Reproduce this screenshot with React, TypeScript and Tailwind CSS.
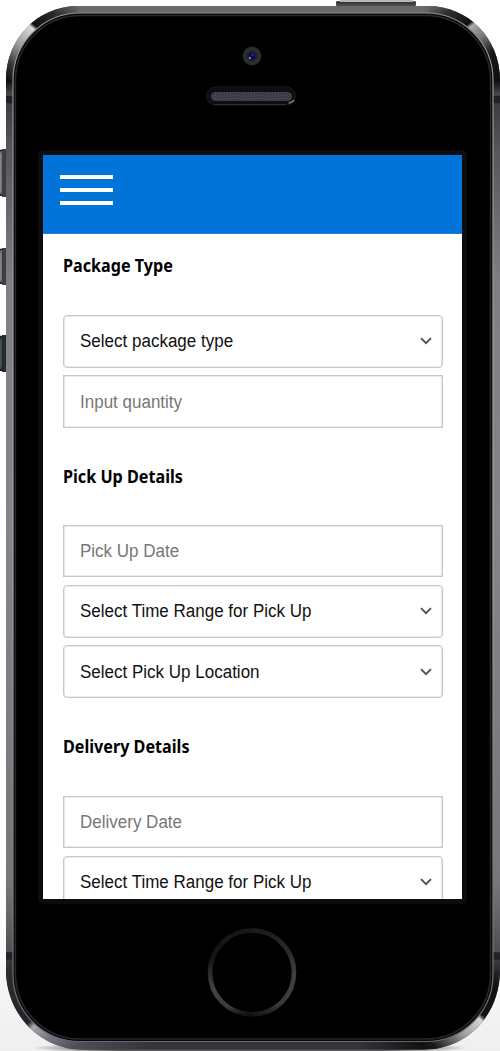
import React from "react";

const RIM =
  "M78 6 H428 C468 6 500 38 500 80 V970 C500 1014 468 1049.5 424 1049.5 H82 C40 1049.5 6 1014 6 970 V80 C6 38 38 6 78 6 Z";

function SideButton({ y, h, dark }: { y: number; h: number; dark?: boolean }) {
  return (
    <g>
      <rect x="-4" y={y + 1} width="9" height={h - 2} fill={dark ? "#353c44" : "#6b6b6b"} />
      <path d={`M0 ${y + 1.5}H5M0 ${y + h - 2}H5`} stroke="#161719" strokeWidth="1.5" />
      <rect x="2" y={y} width="4" height={h} fill={dark ? "#252a30" : "#3e3e3f"} />
      <rect x="0" y={y + 5} width="1.4" height={h - 10} fill={dark ? "#4b535c" : "#858585"} />
    </g>
  );
}

function Device() {
  return (
    <svg className="absolute inset-0" width="500" height="1051" viewBox="0 0 500 1051" aria-hidden="true">
      <defs>
        <linearGradient id="rim" x1="0" y1="0" x2="0" y2="1051" gradientUnits="userSpaceOnUse">
          <stop offset="0" stopColor="#69696c" />
          <stop offset="0.03" stopColor="#69696c" />
          <stop offset="0.076" stopColor="#0c0c0e" />
          <stop offset="0.09" stopColor="#4a4a4d" />
          <stop offset="0.1" stopColor="#3e3e42" />
          <stop offset="0.14" stopColor="#55555a" />
          <stop offset="0.27" stopColor="#808084" />
          <stop offset="0.5" stopColor="#858589" />
          <stop offset="0.84" stopColor="#77777a" />
          <stop offset="0.905" stopColor="#505053" />
          <stop offset="0.912" stopColor="#3a3a3d" />
          <stop offset="0.925" stopColor="#2c2c2f" />
          <stop offset="1" stopColor="#37353c" />
        </linearGradient>
        <linearGradient id="tl" x1="6" y1="100" x2="82" y2="6" gradientUnits="userSpaceOnUse">
          <stop offset="0" stopColor="#0c0c0e" />
          <stop offset="0.12" stopColor="#0c0c0e" />
          <stop offset="0.26" stopColor="#39393c" />
          <stop offset="0.42" stopColor="#9b9b9e" />
          <stop offset="0.6" stopColor="#dadadc" />
          <stop offset="0.63" stopColor="#101013" />
          <stop offset="0.8" stopColor="#29292c" />
          <stop offset="0.98" stopColor="#69696c" />
        </linearGradient>
        <linearGradient id="tr" x1="425" y1="6" x2="500" y2="100" gradientUnits="userSpaceOnUse">
          <stop offset="0.02" stopColor="#69696c" />
          <stop offset="0.16" stopColor="#303033" />
          <stop offset="0.34" stopColor="#101012" />
          <stop offset="0.37" stopColor="#aaa9ac" />
          <stop offset="0.5" stopColor="#747477" />
          <stop offset="0.65" stopColor="#161618" />
          <stop offset="1" stopColor="#0c0c0e" />
        </linearGradient>
        <linearGradient id="bl" x1="6" y1="975" x2="78" y2="1050" gradientUnits="userSpaceOnUse">
          <stop offset="0" stopColor="#2c2c2f" />
          <stop offset="0.48" stopColor="#242428" />
          <stop offset="0.54" stopColor="#a9a7b0" />
          <stop offset="0.72" stopColor="#77757e" />
          <stop offset="0.97" stopColor="#4e4c54" />
        </linearGradient>
        <linearGradient id="br" x1="500" y1="970" x2="422" y2="1050" gradientUnits="userSpaceOnUse">
          <stop offset="0" stopColor="#2c2c2f" />
          <stop offset="0.12" stopColor="#111113" />
          <stop offset="0.4" stopColor="#111113" />
          <stop offset="0.44" stopColor="#d6d6d7" />
          <stop offset="0.65" stopColor="#99999c" />
          <stop offset="0.9" stopColor="#18181a" />
          <stop offset="1" stopColor="#101012" />
        </linearGradient>
        <linearGradient id="edge" x1="0" y1="0" x2="0" y2="1">
          <stop offset="0" stopColor="#909093" />
          <stop offset="0.5" stopColor="#a6a6a9" />
          <stop offset="1" stopColor="#68676c" />
        </linearGradient>
        <linearGradient id="bottom" x1="80" y1="0" x2="424" y2="0" gradientUnits="userSpaceOnUse">
          <stop offset="0" stopColor="#4e4c54" />
          <stop offset="0.2" stopColor="#37353c" />
          <stop offset="0.8" stopColor="#37353c" />
          <stop offset="1" stopColor="#101012" />
        </linearGradient>
        <linearGradient id="haze" x1="0" y1="880" x2="0" y2="1051" gradientUnits="userSpaceOnUse">
          <stop offset="0" stopColor="#ffffff" />
          <stop offset="1" stopColor="#efefef" />
        </linearGradient>
        <radialGradient id="shade" cx="0.5" cy="0.5" r="0.5">
          <stop offset="0.7" stopColor="#000" stopOpacity="0.6" />
          <stop offset="1" stopColor="#000" stopOpacity="0" />
        </radialGradient>
        <linearGradient id="ringL" x1="220" y1="935" x2="232" y2="1017" gradientUnits="userSpaceOnUse">
          <stop offset="0" stopColor="#17171a" />
          <stop offset="0.25" stopColor="#151518" />
          <stop offset="0.65" stopColor="#434248" />
          <stop offset="0.88" stopColor="#3b3a40" />
          <stop offset="1" stopColor="#101012" />
        </linearGradient>
        <linearGradient id="ringR" x1="270" y1="929" x2="252" y2="1017" gradientUnits="userSpaceOnUse">
          <stop offset="0" stopColor="#19191c" />
          <stop offset="0.45" stopColor="#403f45" />
          <stop offset="0.8" stopColor="#3a393e" />
          <stop offset="1" stopColor="#101012" />
        </linearGradient>
        <radialGradient id="lens">
          <stop offset="0" stopColor="#15151c" />
          <stop offset="0.4" stopColor="#202024" />
          <stop offset="0.8" stopColor="#303032" />
          <stop offset="1" stopColor="#171719" />
        </radialGradient>
        <pattern id="mesh" width="3" height="3" patternUnits="userSpaceOnUse">
          <rect width="3" height="3" fill="#302f38" />
          <circle cx="0.8" cy="0.8" r="0.8" fill="#57545f" />
          <circle cx="2.3" cy="2.3" r="0.8" fill="#57545f" />
        </pattern>
      </defs>
      <rect y="880" width="500" height="171" fill="url(#haze)" />
      <ellipse cx="250" cy="1048" rx="218" ry="7" fill="url(#shade)" />
      <SideButton y={149} h={48} />
      <SideButton y={248} h={37} />
      <SideButton y={335} h={37} dark />
      <rect x="336" y="1" width="80" height="5" rx="1" fill="#4a4a4b" />
      <rect x="340" y="0" width="73" height="2" fill="#b5b7b7" />
      <path d="M337 3H415" stroke="#292a2b" />
      <path d={RIM} fill="url(#rim)" />
      <path d="M6 80 C6 38 38 6 78 6 V30 H40 V80Z" fill="url(#tl)" />
      <path d="M428 6 C468 6 500 38 500 80 H470 V30 H428Z" fill="url(#tr)" />
      <path d="M6 970 C6 1014 40 1049.5 82 1049.5 V1020 H30 V970Z" fill="url(#bl)" />
      <path d="M500 970 C500 1014 468 1049.5 424 1049.5 V1020 H470 V970Z" fill="url(#br)" />
      <rect x="82" y="1040" width="342" height="9.5" fill="url(#bottom)" />
      <path d="M6 99.5H16M490 99.5H500M6 956H16M490 956H500" stroke="#202226" strokeWidth="7.5" />
      <rect x="13" y="13" width="480" height="1028.5" rx="67" fill="#08090b" stroke="url(#edge)" strokeWidth="1.2" />
      <rect x="15.5" y="15.5" width="475" height="1023.5" rx="65" fill="#000" stroke="#25292d" strokeWidth="1.5" />
      <rect x="17.5" y="17.5" width="471" height="1019.5" rx="63" fill="#000" />
      <circle cx="252" cy="56" r="9.7" fill="url(#lens)" />
      <circle cx="252" cy="56.5" r="3.2" fill="#090951" />
      <rect x="251" y="54" width="3" height="2" fill="#1620bc" />
      <rect x="249" y="57" width="1.8" height="2" fill="#8c92a7" />
      <rect x="206.5" y="87" width="89" height="18" rx="9" fill="#0c0f11" stroke="#171a1c" />
      <path d="M214 104.5H286" stroke="#2b2f31" />
      <path d="M288.5 103Q292.5 102.5 294 100" stroke="#6b6969" strokeWidth="2" fill="none" />
      <rect x="211" y="92" width="81" height="9" rx="4.5" fill="url(#mesh)" />
      <path d="M252 930.5A42 42 0 0 0 252 1014.5" fill="none" stroke="url(#ringL)" strokeWidth="4.6" />
      <path d="M252 930.5A42 42 0 0 1 252 1014.5" fill="none" stroke="url(#ringR)" strokeWidth="4.6" />
    </svg>
  );
}

function Heading({ children }: { children: string }) {
  return (
    <h2 className="h-6 text-[17px] leading-6 font-bold whitespace-nowrap text-black">
      <span className="inline-block origin-left scale-x-[0.95] font-['Noto_Sans',sans-serif]">{children}</span>
    </h2>
  );
}

function Field({ label, select }: { label: string; select?: boolean }) {
  return (
    <div
      className={
        "flex h-[52.5px] w-[380px] shrink-0 items-center justify-between border border-[#c8c8c8] bg-white pr-[10px] pl-4 text-[17px] leading-6 shadow-[inset_0_0_0_0.6px_#d8d8d8] " +
        (select ? "rounded-[4px] text-[#111]" : "text-[#777]")
      }
    >
      <span className="inline-block origin-top scale-y-[1.05] whitespace-nowrap">{label}</span>
      {select && (
        <svg width="12" height="8" viewBox="0 0 12 8" fill="none" stroke="#505050" strokeWidth="1.9" aria-hidden="true">
          <path d="M1 1.2L6 6.2L11 1.2" />
        </svg>
      )}
    </div>
  );
}

export default function App() {
  return (
    <div className="relative h-[1051px] w-[500px] overflow-hidden bg-white font-['Liberation_Sans',Arial,sans-serif]">
      <Device />
      <div className="relative pt-[150px] pl-[38px]">
        <div className="h-[754px] w-[429px] rounded-[5px] bg-[#0b0c10] p-[5px]">
          <main className="flex h-[744px] w-[419px] flex-col overflow-hidden bg-white">
            <header className="h-[79px] shrink-0 border-b border-[#237fdf] bg-[#0074d9] pt-5 pl-[17px]">
              <div className="flex w-[53px] flex-col gap-[9px]">
                <div className="h-1 bg-white" />
                <div className="h-1 bg-white" />
                <div className="h-1 bg-white" />
              </div>
            </header>
            <div className="flex flex-col px-5 pt-5">
              <Heading>Package Type</Heading>
              <div className="mt-[37px] flex flex-col gap-[7.75px]">
                <Field label="Select package type" select />
                <Field label="Input quantity" />
              </div>
              <div className="mt-[37px]">
                <Heading>Pick Up Details</Heading>
              </div>
              <div className="mt-[36px] flex flex-col gap-[7.75px]">
                <Field label="Pick Up Date" />
                <Field label="Select Time Range for Pick Up" select />
                <Field label="Select Pick Up Location" select />
              </div>
              <div className="mt-[37px]">
                <Heading>Delivery Details</Heading>
              </div>
              <div className="mt-[37px] flex flex-col gap-[7.75px]">
                <Field label="Delivery Date" />
                <Field label="Select Time Range for Pick Up" select />
              </div>
            </div>
          </main>
        </div>
      </div>
    </div>
  );
}
